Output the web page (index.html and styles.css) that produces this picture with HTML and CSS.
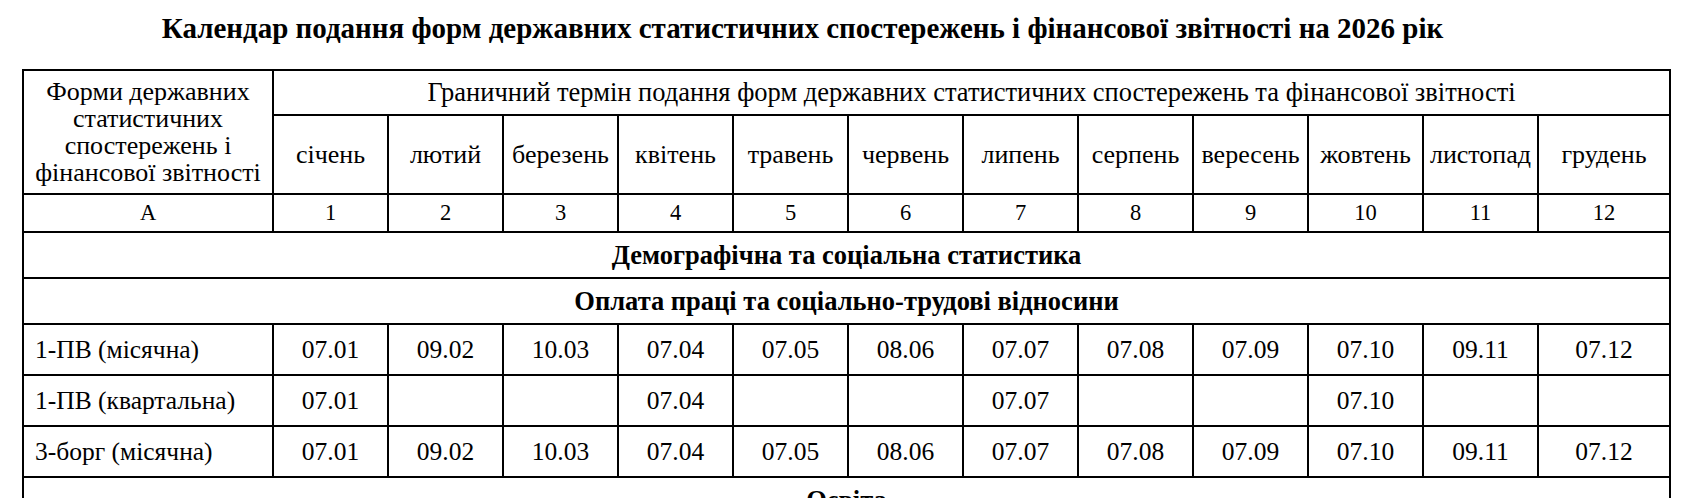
FILE: index.html
```html
<!DOCTYPE html>
<html lang="uk">
<head>
<meta charset="utf-8">
<title>Календар подання форм</title>
<link rel="stylesheet" href="styles.css">
</head>
<body>
<div class="page">
  <h1 class="title">Календар подання форм державних статистичних спостережень і фінансової звітності на 2026 рік</h1>
  <table class="cal">
    <colgroup>
      <col class="c-form">
      <col class="c-m"><col class="c-m"><col class="c-m"><col class="c-m"><col class="c-m"><col class="c-m">
      <col class="c-m"><col class="c-m"><col class="c-m"><col class="c-m"><col class="c-m"><col class="c-last">
    </colgroup>
    <thead>
      <tr class="r-head1">
        <th class="h-form" rowspan="2">Форми державних статистичних спостережень і фінансової звітності</th>
        <th class="h-span" colspan="12">Граничний термін подання форм державних статистичних спостережень та фінансової звітності</th>
      </tr>
      <tr class="r-months">
        <th>січень</th><th>лютий</th><th>березень</th><th>квітень</th><th>травень</th><th>червень</th>
        <th>липень</th><th>серпень</th><th>вересень</th><th>жовтень</th><th>листопад</th><th>грудень</th>
      </tr>
      <tr class="r-nums">
        <th>А</th><th>1</th><th>2</th><th>3</th><th>4</th><th>5</th><th>6</th><th>7</th><th>8</th><th>9</th><th>10</th><th>11</th><th>12</th>
      </tr>
    </thead>
    <tbody>
      <tr class="r-sect"><td colspan="13">Демографічна та соціальна статистика</td></tr>
      <tr class="r-sect"><td colspan="13">Оплата праці та соціально-трудові відносини</td></tr>
      <tr class="r-data">
        <td class="name">1-ПВ (місячна)</td>
        <td>07.01</td><td>09.02</td><td>10.03</td><td>07.04</td><td>07.05</td><td>08.06</td>
        <td>07.07</td><td>07.08</td><td>07.09</td><td>07.10</td><td>09.11</td><td>07.12</td>
      </tr>
      <tr class="r-data r-q">
        <td class="name">1-ПВ (квартальна)</td>
        <td>07.01</td><td></td><td></td><td>07.04</td><td></td><td></td>
        <td>07.07</td><td></td><td></td><td>07.10</td><td></td><td></td>
      </tr>
      <tr class="r-data">
        <td class="name">3-борг (місячна)</td>
        <td>07.01</td><td>09.02</td><td>10.03</td><td>07.04</td><td>07.05</td><td>08.06</td>
        <td>07.07</td><td>07.08</td><td>07.09</td><td>07.10</td><td>09.11</td><td>07.12</td>
      </tr>
      <tr class="r-sect"><td colspan="13">Освіта</td></tr>
    </tbody>
  </table>
</div>
</body>
</html>
```
FILE: styles.css
```css
html, body {
  margin: 0;
  padding: 0;
  background: #fff;
  overflow: hidden;
}
body {
  font-family: "Liberation Serif", "Times New Roman", serif;
  color: #000;
}
.page {
  padding: 12px 25px 0 22px;
}
.title {
  margin: 0 0 24px 0;
  padding-right: 86px;
  font-size: 29px;
  line-height: 33px;
  font-weight: bold;
  text-align: center;
}
.cal {
  border-collapse: collapse;
  table-layout: fixed;
  width: 1647px;
}
.c-form { width: 250px; }
.c-m { width: 115px; }
.c-last { width: 132px; }
.cal th, .cal td {
  border: 2px solid #000;
  padding: 0;
  text-align: center;
  vertical-align: middle;
  font-weight: normal;
}
.r-head1 th { height: 43px; font-size: 26.5px; }
.r-head1 th.h-form {
  font-size: 26px;
  line-height: 27px;
  padding: 0;
}
.r-months th { height: 77px; font-size: 26px; }
.r-nums th { height: 36px; font-size: 22.5px; }
.r-sect td {
  height: 44px;
  font-size: 26.5px;
  font-weight: bold;
}
.r-data td { height: 49px; font-size: 25.5px; }
.r-data td.name {
  text-align: left;
  padding-left: 11px;
}
```
